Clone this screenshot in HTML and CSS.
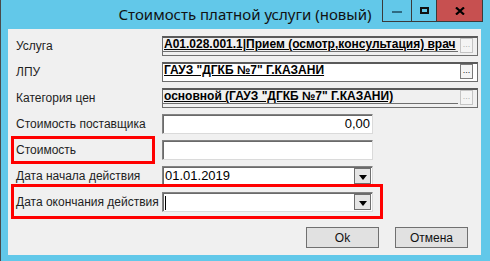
FILE: index.html
```html
<!DOCTYPE html>
<html>
<head>
	<meta charset="utf-8">
	<title>Стоимость платной услуги (новый)</title>
	<link rel="stylesheet" href="styles.css">
</head>
<body>
<div class="window">
	<div class="titlebar">
		<div></div>
		<div class="title">Стоимость платной услуги (новый)</div>
		<div class="caption-btns">
			<div class="cap-btn cap-min"><span></span></div>
			<div class="cap-btn cap-max"><span></span></div>
			<div class="cap-btn cap-close">
				<svg width="10" height="8" viewBox="0 0 10 8"><path d="M1 0.5 L9 7.5 M9 0.5 L1 7.5" stroke="#000" stroke-width="2.2"/></svg>
			</div>
		</div>
	</div>

	<div class="client">
		<div class="form">
			<div class="row">
				<label>Услуга</label>
				<div class="lookup">
					<div class="lookup-val">A01.028.001.1|Прием (осмотр,консультация) врач</div>
					<div class="lookup-btn disabled">...</div>
				</div>
			</div>
			<div class="row">
				<label>ЛПУ</label>
				<div class="lookup editable">
					<div class="lookup-val">ГАУЗ "ДГКБ №7" Г.КАЗАНИ</div>
					<div class="lookup-btn">...</div>
				</div>
			</div>
			<div class="row">
				<label>Категория цен</label>
				<div class="lookup">
					<div class="lookup-val">основной (ГАУЗ "ДГКБ №7" Г.КАЗАНИ)</div>
					<div class="lookup-btn disabled">...</div>
				</div>
			</div>
			<div class="row">
				<label>Стоимость поставщика</label>
				<div class="edit num">0,00</div>
			</div>
			<div class="row">
				<label>Стоимость</label>
				<div class="edit"></div>
			</div>
			<div class="row">
				<label>Дата начала действия</label>
				<div class="edit combo">
					<div class="combo-val">01.01.2019</div>
					<div class="drop-btn"><i></i></div>
				</div>
			</div>
			<div class="row">
				<label>Дата окончания действия</label>
				<div class="edit combo">
					<div class="combo-val"><span class="caret"></span></div>
					<div class="drop-btn"><i></i></div>
				</div>
			</div>
		</div>

		<div class="buttons">
			<button>Ok</button>
			<button>Отмена</button>
		</div>

		<!-- red annotation frames -->
		<div class="mark mark-cost"></div>
		<div class="mark mark-end"></div>
	</div>
</div>
</body>
</html>
```

FILE: styles.css
```css
* {
	margin: 0px;
	padding: 0px;
	box-sizing: border-box;
}

body {
	background: #fff;
	font-family: "Liberation Sans", Arial, sans-serif;
	font-size: 12px;
	color: #1e1e1e;
}

.window {
	width: 490px;
	height: 261px;
	background: #62c8e9;
	border-left: 1px solid #4a4a4a;
	padding: 0px 9px 6px 7px;
	display: flex;
	flex-direction: column;
}

.titlebar {
	height: 29px;
	margin: 0px -9px 0px -8px;
	display: grid;
	grid-template-columns: 1fr auto 1fr;
}

.titlebar .title {
	font-family: "Noto Sans", sans-serif;
	font-size: 15px;
	color: #111;
	padding-top: 4px;
	white-space: nowrap;
}

.caption-btns {
	justify-self: end;
	display: flex;
	height: 22px;
	margin-right: 7px;
	border-bottom: 1px solid #3a3a3a;
}

.cap-btn {
	display: flex;
	align-items: center;
	justify-content: center;
	border-left: 1px solid #3a3a3a;
	height: 21px;
}

.cap-min {
	width: 29px;
}

.cap-min span {
	display: block;
	width: 10px;
	height: 2px;
	margin-top: 2px;
	background: #2f6a82;
}

.cap-max {
	width: 25px;
}

.cap-max span {
	display: block;
	width: 9px;
	height: 7px;
	border: 2px solid #111;
}

.cap-close {
	width: 47px;
	background: #c75050;
	border-right: 1px solid #3a3a3a;
}

.client {
	position: relative;
	flex: 1;
	background: #f0f0f0;
	padding: 7px 3px 0px 8px;
	display: flex;
	flex-direction: column;
}

.form {
	display: flex;
	flex-direction: column;
	gap: 6px;
}

.row {
	display: flex;
	align-items: center;
	height: 20px;
}

.row label {
	width: 146px;
	flex-shrink: 0;
}

.lookup {
	flex: 1;
	min-width: 0px;
	height: 20px;
	display: flex;
	align-items: flex-start;
	background: #f0f0f0;
	border: 1px solid #6e6e6e;
	border-top: 2px solid #5a5a5a;
}

.lookup.editable {
	background: #fff;
}

.lookup-val {
	flex: 1;
	min-width: 0px;
	height: 14px;
	padding-left: 1px;
	font-weight: bold;
	font-size: 12px;
	line-height: 13px;
	color: #000;
	text-decoration: underline;
	white-space: nowrap;
	overflow: hidden;
	border-bottom: 1px solid #6e6e6e;
}

.lookup.editable .lookup-val {
	border-bottom: none;
}

.lookup-btn {
	width: 13px;
	height: 15px;
	flex-shrink: 0;
	margin: 0px 4px 0px 2px;
	border: 1px solid #7a7a7a;
	background: #f4f4f4;
	font-size: 9px;
	line-height: 10px;
	text-align: center;
	color: #222;
}

.lookup-btn.disabled {
	border-color: #c4c4c4;
	color: #b0b0b0;
}

.edit {
	width: 211px;
	height: 20px;
	background: #fff;
	border: 1px solid;
	border-color: #828282 #dadada #dadada #828282;
	box-shadow: inset 1px 1px 0px #6a6a6a;
	font-size: 13px;
	line-height: 17px;
	color: #000;
	padding: 0px 3px;
}

.edit.num {
	text-align: right;
	padding-right: 2px;
}

.combo {
	display: flex;
	align-items: center;
	padding: 0px 1px 0px 2px;
}

.combo-val {
	flex: 1;
	height: 17px;
	line-height: 16px;
}

.caret {
	display: inline-block;
	width: 1px;
	height: 14px;
	margin-top: 2px;
	background: #000;
}

.drop-btn {
	width: 17px;
	height: 16px;
	border: 1px solid #6e6e6e;
	background: #e5e5e5;
	display: flex;
	align-items: center;
	justify-content: center;
}

.drop-btn i {
	display: block;
	width: 0px;
	height: 0px;
	border-left: 4px solid transparent;
	border-right: 4px solid transparent;
	border-top: 5px solid #000;
	margin-top: 2px;
}

.buttons {
	display: flex;
	justify-content: flex-end;
	gap: 16px;
	margin-top: 15px;
	padding-right: 10px;
}

.buttons button {
	width: 73px;
	height: 21px;
	background: #e1e1e1;
	border: 1px solid #707070;
	font-family: "Liberation Sans", Arial, sans-serif;
	font-size: 12px;
	color: #111;
}

.mark {
	position: absolute;
	border: 3px solid #ff0000;
}

.mark-cost {
	left: 3px;
	top: 107px;
	width: 144px;
	height: 28px;
}

.mark-end {
	left: 3px;
	top: 155px;
	width: 372px;
	height: 35px;
}
```
